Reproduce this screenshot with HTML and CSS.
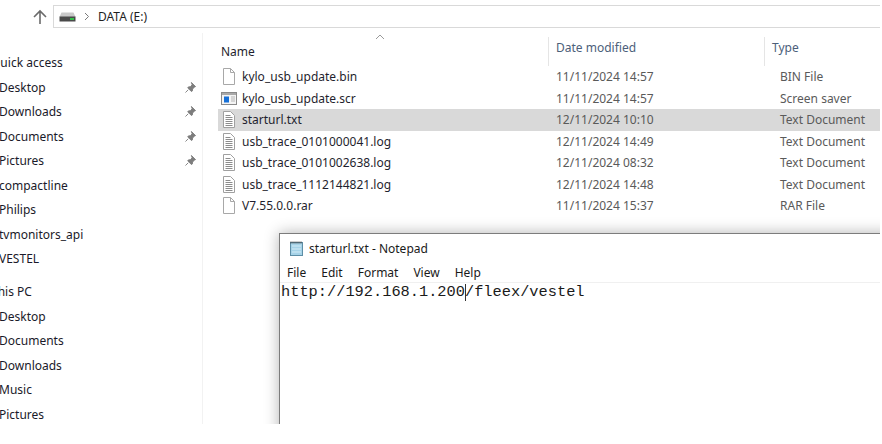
FILE: index.html
```html
<!DOCTYPE html>
<html lang="en">
<head>
  <meta charset="UTF-8">
  <meta name="viewport" content="width=device-width, initial-scale=1.0">
  <title>DATA (E:)</title>
  <link rel="stylesheet" href="styles.css">
</head>
<body>
  <div class="screen">
    <!-- Toolbar -->
    <div class="toolbar">
      <svg class="up-arrow" width="16" height="16" viewBox="0 0 16 16">
        <path d="M8 15V2M2 8l6-6 6 6" fill="none" stroke="#6b6b6b" stroke-width="1.6"/>
      </svg>
      <div class="address">
        <svg class="drive" width="17" height="10" viewBox="0 0 17 10">
          <path d="M2.5 0.5h12l2 4.5H0.5z" fill="#c9c9c9"/>
          <rect x="0.5" y="4.5" width="16" height="5" fill="#4a4a4a"/>
          <rect x="11" y="6" width="4" height="2" fill="#35c04a"/>
        </svg>
        <svg class="crumb" width="6" height="9" viewBox="0 0 6 9">
          <path d="M1 1l3.5 3.5L1 8" fill="none" stroke="#7a7a7a" stroke-width="1"/>
        </svg>
        <span class="address-text">DATA (E:)</span>
      </div>
    </div>

    <div class="main">
      <!-- Navigation pane -->
      <nav class="sidebar">
        <div class="nav-item nav-head">Quick access</div>
        <div class="nav-item">Desktop<svg class="pin" viewBox="0 0 12 12"><path d="M7 0.5l4.5 4.5-1.2.6-2 2-.3 2.2-1 .6-4-4 .6-1 2.2-.3 2-2zM3.5 8.5L0.5 11.5" fill="#7d7d7d" stroke="#7d7d7d"/></svg></div>
        <div class="nav-item">Downloads<svg class="pin" viewBox="0 0 12 12"><path d="M7 0.5l4.5 4.5-1.2.6-2 2-.3 2.2-1 .6-4-4 .6-1 2.2-.3 2-2zM3.5 8.5L0.5 11.5" fill="#7d7d7d" stroke="#7d7d7d"/></svg></div>
        <div class="nav-item">Documents<svg class="pin" viewBox="0 0 12 12"><path d="M7 0.5l4.5 4.5-1.2.6-2 2-.3 2.2-1 .6-4-4 .6-1 2.2-.3 2-2zM3.5 8.5L0.5 11.5" fill="#7d7d7d" stroke="#7d7d7d"/></svg></div>
        <div class="nav-item">Pictures<svg class="pin" viewBox="0 0 12 12"><path d="M7 0.5l4.5 4.5-1.2.6-2 2-.3 2.2-1 .6-4-4 .6-1 2.2-.3 2-2zM3.5 8.5L0.5 11.5" fill="#7d7d7d" stroke="#7d7d7d"/></svg></div>
        <div class="nav-item">compactline</div>
        <div class="nav-item">Philips</div>
        <div class="nav-item">tvmonitors_api</div>
        <div class="nav-item">VESTEL</div>
        <div class="nav-item nav-head nav-gap">This PC</div>
        <div class="nav-item">Desktop</div>
        <div class="nav-item">Documents</div>
        <div class="nav-item">Downloads</div>
        <div class="nav-item">Music</div>
        <div class="nav-item">Pictures</div>
      </nav>

      <!-- File list -->
      <section class="files">
        <svg class="sort" width="10" height="6" viewBox="0 0 10 6">
          <path d="M1 5l4-4 4 4" fill="none" stroke="#9a9a9a" stroke-width="1"/>
        </svg>
        <div class="row head">
          <div class="col-name">Name</div>
          <div class="col-date">Date modified</div>
          <div class="col-type">Type</div>
        </div>
        <div class="row">
          <div class="col-name"><svg class="ficon" viewBox="0 0 14 17"><path d="M1.5.5h7l4 4v12h-11z" fill="#fff" stroke="#a8a8a8"/><path d="M8.5.5v4h4" fill="none" stroke="#a8a8a8"/></svg>kylo_usb_update.bin</div>
          <div class="col-date">11/11/2024 14:57</div>
          <div class="col-type">BIN File</div>
        </div>
        <div class="row">
          <div class="col-name"><svg class="ficon" viewBox="0 0 16 13"><rect x=".5" y=".5" width="15" height="12" fill="#f4f4f4" stroke="#8a8a8a"/><rect x="1" y="1" width="14" height="2" fill="#a9a9a9"/><rect x="3" y="4.5" width="5" height="6" fill="#1670d8"/><path d="M10 5h4M10 7h4M10 9h4" stroke="#b5b5b5"/></svg>kylo_usb_update.scr</div>
          <div class="col-date">11/11/2024 14:57</div>
          <div class="col-type">Screen saver</div>
        </div>
        <div class="row selected">
          <div class="col-name"><svg class="ficon" viewBox="0 0 14 17"><path d="M1.5.5h7l4 4v12h-11z" fill="#fff" stroke="#a0a0a0"/><path d="M3.5 4.5h5M3.5 6.5h7M3.5 8.5h7M3.5 10.5h7M3.5 12.5h7M3.5 14.5h7" stroke="#8c8c8c"/></svg>starturl.txt</div>
          <div class="col-date">12/11/2024 10:10</div>
          <div class="col-type">Text Document</div>
        </div>
        <div class="row">
          <div class="col-name"><svg class="ficon" viewBox="0 0 14 17"><path d="M1.5.5h7l4 4v12h-11z" fill="#fff" stroke="#a0a0a0"/><path d="M3.5 4.5h5M3.5 6.5h7M3.5 8.5h7M3.5 10.5h7M3.5 12.5h7M3.5 14.5h7" stroke="#8c8c8c"/></svg>usb_trace_0101000041.log</div>
          <div class="col-date">12/11/2024 14:49</div>
          <div class="col-type">Text Document</div>
        </div>
        <div class="row">
          <div class="col-name"><svg class="ficon" viewBox="0 0 14 17"><path d="M1.5.5h7l4 4v12h-11z" fill="#fff" stroke="#a0a0a0"/><path d="M3.5 4.5h5M3.5 6.5h7M3.5 8.5h7M3.5 10.5h7M3.5 12.5h7M3.5 14.5h7" stroke="#8c8c8c"/></svg>usb_trace_0101002638.log</div>
          <div class="col-date">12/11/2024 08:32</div>
          <div class="col-type">Text Document</div>
        </div>
        <div class="row">
          <div class="col-name"><svg class="ficon" viewBox="0 0 14 17"><path d="M1.5.5h7l4 4v12h-11z" fill="#fff" stroke="#a0a0a0"/><path d="M3.5 4.5h5M3.5 6.5h7M3.5 8.5h7M3.5 10.5h7M3.5 12.5h7M3.5 14.5h7" stroke="#8c8c8c"/></svg>usb_trace_1112144821.log</div>
          <div class="col-date">12/11/2024 14:48</div>
          <div class="col-type">Text Document</div>
        </div>
        <div class="row">
          <div class="col-name"><svg class="ficon" viewBox="0 0 14 17"><path d="M1.5.5h7l4 4v12h-11z" fill="#fff" stroke="#a8a8a8"/><path d="M8.5.5v4h4" fill="none" stroke="#a8a8a8"/></svg>V7.55.0.0.rar</div>
          <div class="col-date">11/11/2024 15:37</div>
          <div class="col-type">RAR File</div>
        </div>
      </section>
    </div>

    <!-- Notepad window on top -->
    <div class="notepad">
      <div class="np-title">
        <svg class="np-icon" width="15" height="15" viewBox="0 0 15 15">
          <rect x="1.5" y="1.5" width="12" height="13" fill="#a6d3e8" stroke="#5d8ea6"/>
          <path d="M1.5 1.5h12" stroke="#444" stroke-width="2" stroke-dasharray="1 1"/>
          <path d="M3 5h9M3 8h9M3 11h9" stroke="#d4ecf6"/>
        </svg>
        <span>starturl.txt - Notepad</span>
      </div>
      <div class="np-menu">
        <span>File</span><span>Edit</span><span>Format</span><span>View</span><span>Help</span>
      </div>
      <div class="np-text">http://192.168.1.200<span class="caret"></span>/fleex/vestel</div>
    </div>
  </div>
</body>
</html>
```
FILE: styles.css
```css
* {
  margin: 0;
  padding: 0;
  box-sizing: border-box;
}

body {
  background-color: #ffffff;
  font-family: 'Noto Sans', 'Open Sans', sans-serif;
  font-size: 12px;
  overflow: hidden;
}

.screen {
  position: relative;
  width: 880px;
  height: 424px;
  overflow: hidden;
  background-color: #ffffff;
}

/* Toolbar */
.toolbar {
  display: flex;
  align-items: center;
  height: 33px;
  padding: 0 0 0 32px;
}

.up-arrow {
  margin-right: 5px;
}

.address {
  display: flex;
  align-items: center;
  flex: 1;
  height: 23px;
  margin-top: 0;
  padding-left: 5px;
  border: 1px solid #d9d9d9;
  border-right: none;
  color: #1f1f1f;
}

.drive {
  margin-right: 8px;
}

.crumb {
  margin-right: 8px;
}

.main {
  display: flex;
  height: 391px;
}

/* Navigation pane */
.sidebar {
  width: 203px;
  flex-shrink: 0;
  padding-top: 18px;
  border-right: 1px solid #f2f2f2;
  overflow: hidden;
}

.nav-item {
  position: relative;
  height: 24.5px;
  line-height: 24px;
  margin-left: -1px;
  color: #1a1a2a;
  white-space: nowrap;
}

.nav-head {
  margin-left: -9px;
}

.nav-gap {
  margin-top: 8.5px;
}

.pin {
  position: absolute;
  top: 6px;
  left: 186px;
  width: 11px;
  height: 11px;
}

/* File list */
.files {
  position: relative;
  flex: 1;
  padding-left: 15px;
}

.sort {
  position: absolute;
  top: 1px;
  left: 172px;
}

.row {
  display: flex;
  height: 21.5px;
  line-height: 21px;
}

.row.head {
  height: 33px;
  padding-top: 4px;
  color: #4c607a;
}

.row.head .col-date,
.row.head .col-type {
  border-left: 1px solid #e5e5e5;
  color: #4c607a;
}

.row.head .col-date,
.row.head .col-type {
  margin-left: -8px;
  padding-left: 7px;
}

.col-name {
  display: flex;
  align-items: center;
  width: 338px;
  padding-left: 3px;
  color: #1f1f2e;
}

.col-date {
  width: 224px;
  color: #5a5a5a;
}

.col-type {
  flex: 1;
  color: #5a5a5a;
}

.row.selected {
  background-color: #d9d9d9;
}

.ficon {
  width: 16px;
  height: 17px;
  margin-right: 5px;
  flex-shrink: 0;
}

/* Notepad */
.notepad {
  position: absolute;
  top: 233px;
  left: 279px;
  width: 620px;
  height: 210px;
  background-color: #ffffff;
  border: 1px solid #7c7c7c;
  box-shadow: 0 0 14px rgba(0, 0, 0, 0.3);
}

.np-title {
  display: flex;
  align-items: center;
  height: 29px;
  padding-left: 9px;
  color: #1a1a1a;
}

.np-icon {
  margin-right: 5px;
}

.np-menu {
  display: flex;
  gap: 15px;
  height: 20px;
  padding-left: 7px;
  align-items: center;
  margin-top: 0;
  border-bottom: 1px solid #f0f0f0;
  color: #1a1a1a;
}

.np-text {
  padding: 1px 0 0 1px;
  font-family: 'Liberation Mono', monospace;
  font-size: 15.33px;
  line-height: 17px;
  color: #1a1a1a;
  white-space: nowrap;
}

.caret {
  display: inline-block;
  width: 1px;
  height: 17px;
  vertical-align: top;
  margin-right: -1px;
  background-color: #333333;
}
```
